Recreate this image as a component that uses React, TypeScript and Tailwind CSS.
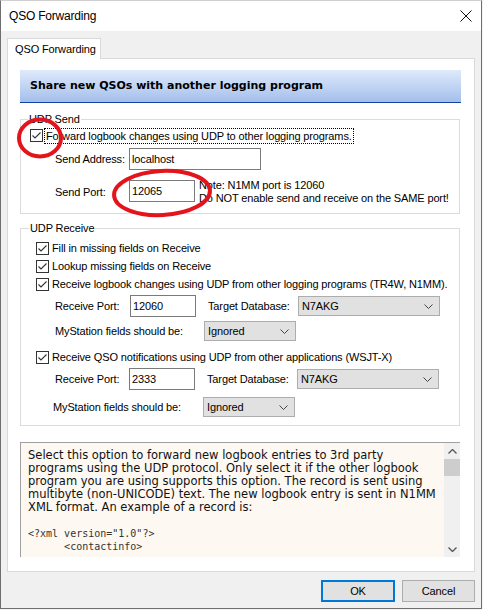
import React from 'react'

const ui = "font-['Liberation_Sans',Arial,sans-serif] text-[11px] tracking-[-0.13px] text-black"

function Check() {
  return (
    <span className="inline-flex h-[13px] w-[13px] shrink-0 items-center justify-center border border-[#333] bg-white">
      <svg width="11" height="11" viewBox="0 0 11 11">
        <path d="M1.5 5.5 L4 8 L9.5 2.5" fill="none" stroke="#333" strokeWidth="1.1" />
      </svg>
    </span>
  )
}

function Chevron() {
  return (
    <svg width="9" height="5" viewBox="0 0 9 5">
      <path d="M0.5 0.5 L4.5 4.5 L8.5 0.5" fill="none" stroke="#444" strokeWidth="1" />
    </svg>
  )
}

function Select({ value, className }: { value: string; className: string }) {
  return (
    <div className={`flex h-[20px] items-center justify-between border border-[#adadad] bg-[#e1e1e1] pl-[3px] pr-[6px] ${className}`}>
      <span>{value}</span>
      <Chevron />
    </div>
  )
}

function Input({ value, className }: { value: string; className: string }) {
  return (
    <div className={`flex h-[22px] items-center border border-[#7a7a7a] bg-white pl-[2px] ${className}`}>
      {value}
    </div>
  )
}

function CheckRow({ label }: { label: string }) {
  return (
    <div className="ml-[15px] flex h-[13px] items-center gap-[3px]">
      <Check />
      <span className="whitespace-nowrap leading-[13px]">{label}</span>
    </div>
  )
}

function ReceiveBlock({ port, shift }: { port: string; shift?: boolean }) {
  return (
    <>
      <div className="mt-[4px] flex h-[22px] items-center">
        <span className={shift ? 'ml-[34px] w-[74px]' : 'ml-[34px] w-[75px]'}>Receive Port:</span>
        <Input value={port} className="w-[66px]" />
        <span className="ml-[12px] w-[90px]">Target Database:</span>
        <Select value="N7AKG" className="w-[142px]" />
      </div>
      <div className={`flex h-[20px] items-center ${shift ? 'mt-[7px]' : 'mt-[4px]'}`}>
        <span className={shift ? 'ml-[32px] w-[150px]' : 'ml-[34px] w-[149px]'}>MyStation fields should be:</span>
        <Select value="Ignored" className="w-[92px]" />
      </div>
    </>
  )
}

export default function App() {
  return (
    <div className={`relative h-[610px] w-[483px] bg-[#f3f3f3] ${ui}`}>
      <div className="flex h-[609px] w-[482px] flex-col border border-t-[#cfcfcf] border-x-[#6e6e6e] border-b-[#6e6e6e] bg-[#f0f0f0]">
        {/* title bar */}
        <div className="flex h-[30px] shrink-0 items-center justify-between bg-white pl-[8px] pr-[8px]">
          <span className="text-[12px] tracking-[-0.2px]">QSO Forwarding</span>
          <svg width="12" height="12" viewBox="0 0 12 12" className="mr-[1px]">
            <path d="M0.5 0.5 L11.5 11.5 M11.5 0.5 L0.5 11.5" stroke="#111" strokeWidth="1" />
          </svg>
        </div>

        <div className="flex flex-1 flex-col px-[6px] pt-[7px]">
          {/* tab */}
          <div className="relative z-10 -mb-px flex h-[21px] w-[94px] items-center border border-b-0 border-[#d9d9d9] bg-white pl-[7px]">
            QSO Forwarding
          </div>
          <div className="flex h-[514px] w-[468px] flex-col border border-[#d9d9d9] bg-white px-[12px] pt-[11px]">
            <div className="flex h-[33px] w-[441px] shrink-0 items-center border-b border-[#1442a4] bg-gradient-to-b from-[#dfeafb] to-[#a4bfec] pl-[10px] pt-[1px] font-['DejaVu_Sans',Verdana,sans-serif] text-[11px] font-bold tracking-normal">
              Share new QSOs with another logging program
            </div>

            {/* UDP Send */}
            <div className="relative mt-[16px] flex h-[95px] w-[440px] shrink-0 flex-col border border-[#dcdcdc] pt-[9px]">
              <span className="absolute -top-[8px] left-[7px] bg-white px-px leading-[14px]">UDP Send</span>
              <div className="ml-[9px] flex h-[13px] items-center">
                <Check />
                <span className="ml-px whitespace-nowrap border border-dotted border-black px-px leading-[14px]">
                  Forward logbook changes using UDP to other logging programs.
                </span>
              </div>
              <div className="mt-[6px] flex h-[22px] items-center">
                <span className="ml-[34px] w-[74px]">Send Address:</span>
                <Input value="localhost" className="w-[132px]" />
              </div>
              <div className="mt-[10px] flex h-[22px] items-start">
                <span className="ml-[34px] mt-[4px] w-[74px]">Send Port:</span>
                <Input value="12065" className="w-[66px]" />
                <div className="-mt-px ml-[4px] leading-[13px]">
                  <div>Note: N1MM port is 12060</div>
                  <div>Do NOT enable send and receive on the SAME port!</div>
                </div>
              </div>
            </div>

            {/* UDP Receive */}
            <div className="relative mt-[14px] flex h-[198px] w-[440px] shrink-0 flex-col border border-[#dcdcdc] pt-[13px]">
              <span className="absolute -top-[8px] left-[8px] bg-white px-px leading-[14px]">UDP Receive</span>
              <div className="flex flex-col gap-[5px]">
                <CheckRow label="Fill in missing fields on Receive" />
                <CheckRow label="Lookup missing fields on Receive" />
                <CheckRow label="Receive logbook changes using UDP from other logging programs (TR4W, N1MM)." />
              </div>
              <ReceiveBlock port="12060" />
              <div className="mt-[10px]">
                <CheckRow label="Receive QSO notifications using UDP from other applications (WSJT-X)" />
              </div>
              <ReceiveBlock port="2333" shift />
            </div>

            {/* description */}
            <div className="mt-[16px] flex h-[115px] w-[440px] shrink-0 border-l border-t border-[#a0a0a0] bg-[#fdf8f1]">
              <div className="flex-1 overflow-hidden pl-[7px] pt-[6px] font-['DejaVu_Sans',Verdana,sans-serif] text-[11.5px] leading-[13px] tracking-normal text-[#111]">
                <div className="whitespace-nowrap">Select this option to forward new logbook entries to 3rd party</div>
                <div className="whitespace-nowrap">programs using the UDP protocol. Only select it if the other logbook</div>
                <div className="whitespace-nowrap">program you are using supports this option. The record is sent using</div>
                <div className="whitespace-nowrap">multibyte (non-UNICODE) text. The new logbook entry is sent in N1MM</div>
                <div className="whitespace-nowrap">XML format. An example of a record is:</div>
                <div className="h-[13px]" />
                <div className="whitespace-pre font-['DejaVu_Sans_Mono',monospace] text-[10px] text-[#333]">{'<?xml version="1.0"?>'}</div>
                <div className="whitespace-pre font-['DejaVu_Sans_Mono',monospace] text-[10px] text-[#333]">{'      <contactinfo>'}</div>
              </div>
              <div className="flex w-[16px] flex-col items-center bg-[#f0f0f0]">
                <div className="flex h-[16px] items-center justify-center">
                  <svg width="9" height="5" viewBox="0 0 9 5"><path d="M0.5 4.5 L4.5 0.5 L8.5 4.5" fill="none" stroke="#555" strokeWidth="1.3" /></svg>
                </div>
                <div className="h-[17px] w-full bg-[#cdcdcd]" />
                <div className="flex-1" />
                <div className="flex h-[16px] items-center justify-center">
                  <svg width="9" height="5" viewBox="0 0 9 5"><path d="M0.5 0.5 L4.5 4.5 L8.5 0.5" fill="none" stroke="#555" strokeWidth="1.3" /></svg>
                </div>
              </div>
            </div>
          </div>

          {/* buttons */}
          <div className="mt-[8px] flex justify-end gap-[7px]">
            <button className="flex h-[22px] w-[74px] items-center justify-center border-2 border-[#0078d7] bg-[#e1e1e1]">OK</button>
            <button className="flex h-[22px] w-[73px] items-center justify-center border border-[#adadad] bg-[#e1e1e1]">Cancel</button>
          </div>
        </div>
      </div>

      {/* red annotation marks */}
      <svg className="pointer-events-none absolute left-0 top-0" width="483" height="610">
        <ellipse cx="40" cy="138" rx="21" ry="18.5" fill="none" stroke="#e3141c" strokeWidth="4" />
        <ellipse cx="162" cy="193" rx="48" ry="22" fill="none" stroke="#e3141c" strokeWidth="4" transform="rotate(-3 162 193)" />
      </svg>
    </div>
  )
}
